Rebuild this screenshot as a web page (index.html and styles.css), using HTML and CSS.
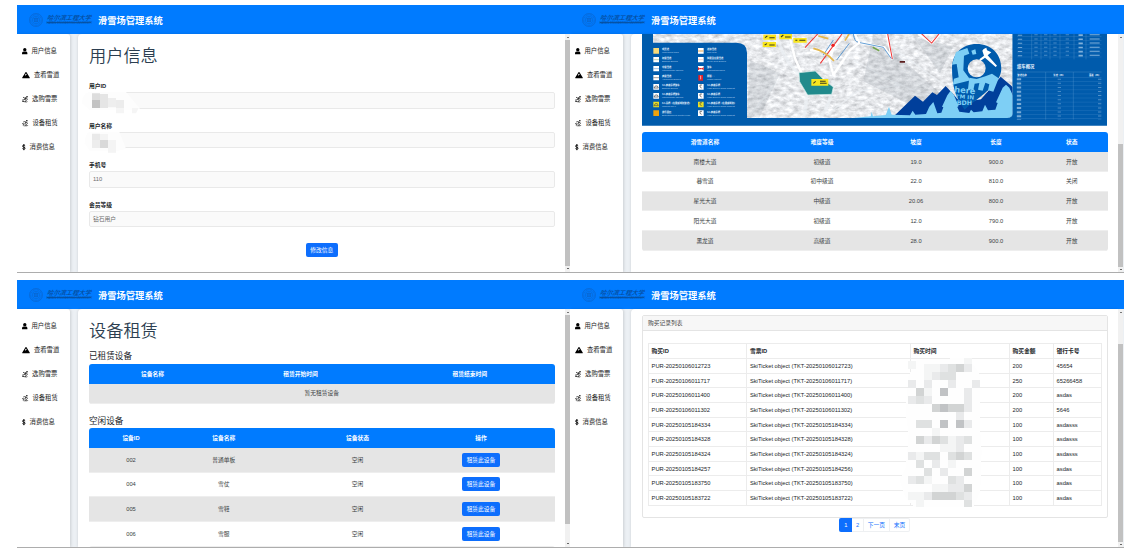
FILE: index.html
```html
<!DOCTYPE html>
<html>
<head>
<meta charset="utf-8">
<title>滑雪场管理系统</title>
<link rel="stylesheet" href="styles.css">
</head>
<body>
<svg class="defs" width="0" height="0">
  <symbol id="i-user" viewBox="0 0 14 16"><circle cx="7" cy="4.2" r="4.2"/><path d="M0 16v-3q0-4 4-4h6q4 0 4 4v3z"/></symbol>
  <symbol id="i-mount" viewBox="0 0 20 16"><path fill-rule="evenodd" d="M10 0q.8 0 1.300.8l8.300 13.400q.8 1.800-1.200 1.800H1.600Q-.4 16 .4 14.200L8.700.8Q9.200 0 10 0zM10 3.500L7.300 7.700l1.200 1.400 1.800-2h2z"/></symbol>
  <symbol id="i-ski" viewBox="0 0 16 16"><circle cx="13" cy="1.800" r="2"/><path fill="none" stroke="currentColor" stroke-width="2" d="M3 3l3 2 5-1-4 4 4 3-2 4M10 5l2 3h3M1 10l4 0 2-2M0 13l9 2.500q3 1 5-1"/></symbol>
  <symbol id="i-nordic" viewBox="0 0 16 16"><circle cx="12" cy="2" r="1.900"/><path fill="none" stroke="currentColor" stroke-width="1.700" d="M3 5l3-1 4 1-3 4 4 2-2 4M10 5l2 3h3M0 9l5 1-2 4M4 15h9l2-2"/></symbol>
  <symbol id="i-dollar" viewBox="0 0 9 16"><path fill="none" stroke="currentColor" stroke-width="2.200" d="M4.500 0v16M8 4.500Q7 3 4.500 3 1.200 3 1.200 5.400 1.200 7.400 4.500 8 8 8.600 8 10.800 8 13 4.500 13 2 13 1 11.300"/></symbol>
  <symbol id="i-seal" viewBox="0 0 28 28"><g fill="none" stroke="#0b62c4"><circle cx="14" cy="14" r="13" stroke-width="1.200"/><circle cx="14" cy="14" r="10.500" stroke-width="1.500" stroke-dasharray="1.500 1.300"/><circle cx="14" cy="14" r="7.500"/><path d="M9 11h10M9 14h10M10 17h8M14 8v11M11 10v8M17 10v8"/></g></symbol>
</svg>
<main class="board">

<section class="panel">
  <header class="top"><svg class="seal"><use href="#i-seal"/></svg><span class="school"><i>哈尔滨工程大学</i><small>HARBIN ENGINEERING UNIVERSITY</small></span><b>滑雪场管理系统</b></header>
  <div class="body">
    <nav class="side">
      <a><svg class="i-user"><use href="#i-user"/></svg>用户信息</a>
      <a><svg class="i-mount"><use href="#i-mount"/></svg>查看雪道</a>
      <a><svg class="i-ski"><use href="#i-ski"/></svg>选购雪票</a>
      <a><svg class="i-nordic"><use href="#i-nordic"/></svg>设备租赁</a>
      <a><svg class="i-dollar"><use href="#i-dollar"/></svg>消费信息</a>
    </nav>
    <div class="content">
      <h1>用户信息</h1>
      <div class="field"><label>用户ID</label><div class="input"></div>
        <svg class="mask" viewBox="0 0 174 66"><path fill="#fdfdfd" d="M22 0h110l42 50-24 5H24L0 34Q0 5 22 0z"/><path fill="#ddd" d="M30 4h24v20H30z"/><path fill="#c3c3c3" d="M30 24h24v24H30z"/><path fill="#e5e5e5" d="M54 6h24v18H54zM54 24h24v24H54z"/><path fill="#eee" d="M78 18h24v28H78z"/><path fill="#ececec" d="M102 24h24v24H102z"/><path fill="#f5f5f5" d="M102 48h24v16H102zM150 48h20l-8 16h-12z"/></svg></div>
      <div class="field"><label>用户名称</label><div class="input"></div>
        <svg class="mask" viewBox="0 0 174 66"><path fill="#fdfdfd" d="M22 0h90l20 50-28 8H24L8 34Q10 5 22 0z"/><path fill="#e9e9e9" d="M30 5h24v19H30z"/><path fill="#ededed" d="M30 24h24v24H30z"/><path fill="#d9d9d9" d="M54 24h24v24H54z"/><path fill="#f4f4f4" d="M54 6h24v18H54zM78 24h24v38H78z"/></svg></div>
      <div class="field"><label>手机号</label><div class="input">110</div></div>
      <div class="field"><label>会员等级</label><div class="input">钻石用户</div></div>
      <button class="btn edit">修改信息</button>
    </div>
    <div class="scroll s1"><i></i></div>
  </div>
</section>

<section class="panel">
  <header class="top"><svg class="seal"><use href="#i-seal"/></svg><span class="school"><i>哈尔滨工程大学</i><small>HARBIN ENGINEERING UNIVERSITY</small></span><b>滑雪场管理系统</b></header>
  <div class="body">
    <nav class="side">
      <a><svg class="i-user"><use href="#i-user"/></svg>用户信息</a>
      <a><svg class="i-mount"><use href="#i-mount"/></svg>查看雪道</a>
      <a><svg class="i-ski"><use href="#i-ski"/></svg>选购雪票</a>
      <a><svg class="i-nordic"><use href="#i-nordic"/></svg>设备租赁</a>
      <a><svg class="i-dollar"><use href="#i-dollar"/></svg>消费信息</a>
    </nav>
    <div class="content flush">
      <svg class="map" viewBox="1926 102 1395 275" preserveAspectRatio="none">
        <defs>
          <filter id="snow" x="0" y="0" width="100%" height="100%"><feTurbulence type="fractalNoise" baseFrequency=".05 .09" numOctaves="4" seed="8"/><feColorMatrix values=".75 0 0 0 .42  .75 0 0 0 .435  .75 0 0 0 .46  0 0 0 0 1"/></filter>
          <pattern id="rows" width="264" height="12.300" patternUnits="userSpaceOnUse" x="3051" y="0"><path d="M0 12h254" stroke="#5b9ad2" stroke-width="1"/></pattern>
          <clipPath id="land"><path d="M1959 102H3038v238q0 14-18 14H2241V158q0-30-32-30H1959z"/></clipPath>
        </defs>
        <path fill="#005bac" d="M1926 102h1395v275H1926z"/>
        <g clip-path="url(#land)">
          <path fill="#cfd3d8" filter="url(#snow)" d="M1959 102h1079v252H1959z"/>
          <g fill="none" stroke="#edf1f5" opacity=".7"><path stroke-width="10" d="M2330 105q15 65 60 110t20 139M2500 240q-5 70-40 114"/><path stroke-width="4" d="M2560 180l110 60 160 70M2250 345l90-110M2660 130l180 130M2480 345l90-70 130-20"/></g>
          <path fill="#8f969e" opacity=".22" d="M2620 102l260 230-70 22-220-110zM2250 180l90 40-60 130h-40zM2740 110l120 30-40 80z"/>
          <g fill="none" stroke="#fff" stroke-width="7"><path d="M2370 115l15 60 20 45M2500 225l-12-45 18-50M2500 225l50-75 28-22 75 14 24 35M2578 128l-14-26M2660 102l17 75M2755 102l40 26 26-26M2430 150l60 5 40-45"/></g>
          <path fill="#218a8c" stroke="#d6ece9" stroke-width="2" d="M2397 218l49-5 29 30 25 18-5 22-72 2-24-40z"/>
          <path fill="none" stroke="#e33" stroke-width="3" d="M2415 143l38-41M2461 190l65-88M2663 102l14 75M2765 102l30 27 22-27"/>
          <circle cx="2499" cy="136" r="5" fill="#e22"/>
          <path fill="none" stroke="#438acb" stroke-width="2.500" d="M2510 180l38-50M2580 128l70 14 24 34M2560 102q4 25 14 24M2470 165l30-45"/>
          <path fill="none" stroke="#e4b74d" stroke-width="5" d="M2440 145q35 8 62 38M2535 122l12-20M2455 108l30 8"/>
          <path fill="none" stroke="#73a34d" stroke-width="5" d="M2618 142l20 10"/>
          <g fill="#f8e51d"><path d="M2290 104h38v15h-38zM2288 126h40v15h-40zM2338 102h38v16h-38zM2380 114h40v14h-40zM2434 237h51v20h-51z"/></g>
          <g fill="none" stroke="#393b24" stroke-width="3"><path d="M2295 113l7-5M2308 113h16M2294 135l7-4M2308 135h16M2343 111l7-6M2355 111h17M2386 121h6M2398 121h18M2440 250l7-6M2460 244h17M2460 250h20"/></g>
          <path fill="#5b1d1d" d="M2699 183h16v5h-16z"/>
          <path fill="#003f9b" d="M2680 350l65-63 24 18 28-28 14 8 26-27 46 50 60-10 59-68 42 36v93z"/>
          <path fill="#005bac" fill-rule="evenodd" d="M2930 132c44 0 74 30 74 73 0 48-58 78-110 124-26-34-38-66-38-124 0-43 30-73 74-73zM2930 178a26 26 0 100 54 26 26 0 000-54z"/>
          <g fill="#7ecff5"><path d="M2868 156l34-12 6 17-16 6-2 44 22 30-54 13 4-18 14-4-6-40-14 2zM2914 152l12-4 3 14-11 2z"/><path d="M2908 233l22 4 26-8 20-8 20 14-16 40-16-4 4-18-12-5-8 24-14-3 4-20-14 2-4 20-16-4z"/></g>
          <g class="pin"><text x="2862" y="277" transform="rotate(5 2862 277)" font-size="25">here</text><text x="2867" y="295" font-size="17" transform="rotate(4 2867 295)">I'M IN</text><text x="2870" y="315" font-size="19">BDH</text></g>
          <path fill="#fff" d="M2951 147l8-4 2 8 13 6-11 9 28 31-4 4-32-28-14 10-3-5 14-11-5-15z"/>
          <path fill="#7ecff5" d="M2560 354l52-5 3-14 4 14 38-4 10-25 8 24 55 2 8-14 8 12 32-2 10-22 12-14 12 34 12-2 6-16-4-2 16-34 10-14 10 14 14 32-4 3 6 14 30 4 5-10 8 8 26-3 8-20 9 17 22-2 7-20-5-2 20-44 10-9 10 9 20 44-5 2 12 20v36z"/>
        </g>
        <g>
          <g fill="#fff"><path fill="#f6d978" d="M1960 144h17v17h-17z"/><path d="M1960 171h17v16h-17zM1960 198h17v16h-17zM1960 225h17v16h-17zM1960 252h17v17h-17zM1960 279h17v17h-17z"/><path fill="#e9df26" d="M1960 305h17v17h-17zM2094 305h17v17h-17z"/><path fill="#f0a30b" d="M1960 331h17v17h-17z"/><path d="M2094 144h17v17h-17zM2094 171h17v16h-17zM2094 198h17v16h-17zM2094 252h17v17h-17zM2094 279h17v17h-17zM2094 331h17v17h-17z"/></g>
          <path fill="#e02028" d="M2094 201l7 5-7 5zM2111 201l-7 5 7 5zM2100 204h5v4h-5zM2095 225h14v17h-14z"/>
          <g fill="none" stroke="#444" stroke-width="2"><path d="M1962 264l4-6h6l3 6zM1962 291l4-6h6l3 6zM1962 317l4-6h6l3 6zM2106 255h-6v6l5 3M2106 282h-6v6l5 3M2106 308h-6v6l5 3M2106 334h-6v6l5 3"/></g>
          <path fill="none" stroke="#9dbb8f" stroke-width="2" d="M1960 179h17"/><path stroke="#6aa0d8" stroke-width="2" d="M1960 206h17"/><path stroke="#666" stroke-width="2" d="M1960 233h17"/><path stroke="#e8b9b0" stroke-width="2" d="M2094 179h17"/><path stroke="#e9a34d" stroke-width="3" d="M2094 153h17"/><path stroke="#fff" stroke-width="2" d="M2102 227v11"/>
          <g class="zh"><text x="1986" y="151">观景道</text><text x="1986" y="178">初级雪道</text><text x="1986" y="205">中级雪道</text><text x="1986" y="232">高级雪道</text><text x="1986" y="259">4人高速吊椅缆车</text><text x="1986" y="286">4人高速吊椅缆车</text><text x="1986" y="312">6人吊椅（在建或规划缆道）</text><text x="1986" y="339">游乐园区</text><text x="2121" y="151">连接雪道</text><text x="2121" y="178">拟建及在建雪道</text><text x="2121" y="205">缆车</text><text x="2121" y="232">魔毯 ○</text><text x="2121" y="259">4人高速吊椅</text><text x="2121" y="286">4人高速吊椅</text><text x="2121" y="312">4人高速吊椅（在建或规划）</text><text x="2121" y="339">4人高速吊椅</text></g>
          <g class="en"><text x="1986" y="160">Wild snow trails</text><text x="1986" y="187">Easiest Slopes</text><text x="1986" y="214">Intermediate Slopes</text><text x="1986" y="241">Advanced Slopes</text><text x="1986" y="268">Easiest Slopes</text><text x="1986" y="295">Intermediate Slopes</text><text x="1986" y="321">Chairlift No.6</text><text x="1986" y="348">Entertainment Center Park</text><text x="2121" y="160">Link Trail</text><text x="2121" y="187">To be built Slopes</text><text x="2121" y="214">Chairlift/Gondola</text><text x="2121" y="241">Magic Carpet</text><text x="2121" y="268">High Speed Quad Chairlift</text><text x="2121" y="295">High Speed Quad Chairlift</text><text x="2121" y="321">High Speed Quad Chairlift</text><text x="2121" y="348">High Speed Quad Chairlift</text></g>
        </g>
        <path fill="url(#rows)" d="M3051 102h254v76h-254zM3051 230h254v129h-254z"/>
        <path fill="none" stroke="#5b9ad2" d="M3095 102v76M3123 102v76M3150 102v76M3180 102v76M3222 102v76M3258 102v76M3051 216h254M3137 216v143M3220 216v143"/>
        <g fill="none" stroke="#a0c5e6"><path stroke-dasharray="3 9.300" stroke-width="13" opacity=".7" d="M3060 104v74"/><path stroke-dasharray="5 7.300" stroke-width="13" opacity=".8" d="M3242 103v74"/><path stroke-dasharray="3 9.300" stroke-width="30" opacity=".8" d="M3284 103v74"/><path stroke-dasharray="3 9.300" stroke-width="10" opacity=".45" d="M3108 103v74M3137 103v74M3165 103v74M3202 103v74M3178 236v124"/><path stroke-dasharray="6 6.300" stroke-width="13" opacity=".75" d="M3057 235v124"/><path stroke-dasharray="3 9.300" stroke-width="10" opacity=".5" d="M3299 236v124"/></g>
        <g class="zh"><text class="cap" x="3051" y="205">缆车概况</text><text x="3052" y="227">缆道名称</text><text x="3160" y="227">长度（m）</text><text x="3267" y="227">落差（m）</text></g>
      </svg>
      <table class="grid runs">
        <colgroup><col class="w126"><col class="w108"><col class="w80"><col class="w80"><col></colgroup>
        <tr><th>滑雪道名称</th><th>难度等级</th><th>坡度</th><th>长度</th><th>状态</th></tr>
        <tr><td>南楼大道</td><td>初级道</td><td>19.0</td><td>900.0</td><td>开放</td></tr>
        <tr><td>暮雪道</td><td>初中级道</td><td>22.0</td><td>810.0</td><td>关闭</td></tr>
        <tr><td>星光大道</td><td>中级道</td><td>20.06</td><td>800.0</td><td>开放</td></tr>
        <tr><td>阳光大道</td><td>初级道</td><td>12.0</td><td>790.0</td><td>开放</td></tr>
        <tr><td>黑龙道</td><td>高级道</td><td>28.0</td><td>900.0</td><td>开放</td></tr>
      </table>
    </div>
    <div class="scroll s2"><i></i></div>
  </div>
</section>

<section class="panel">
  <header class="top"><svg class="seal"><use href="#i-seal"/></svg><span class="school"><i>哈尔滨工程大学</i><small>HARBIN ENGINEERING UNIVERSITY</small></span><b>滑雪场管理系统</b></header>
  <div class="body">
    <nav class="side">
      <a><svg class="i-user"><use href="#i-user"/></svg>用户信息</a>
      <a><svg class="i-mount"><use href="#i-mount"/></svg>查看雪道</a>
      <a><svg class="i-ski"><use href="#i-ski"/></svg>选购雪票</a>
      <a><svg class="i-nordic"><use href="#i-nordic"/></svg>设备租赁</a>
      <a><svg class="i-dollar"><use href="#i-dollar"/></svg>消费信息</a>
    </nav>
    <div class="content">
      <h1>设备租赁</h1>
      <h2 class="rented">已租赁设备</h2>
      <table class="grid">
        <colgroup><col class="w127"><col class="w169"><col></colgroup>
        <tr><th>设备名称</th><th>租赁开始时间</th><th>租赁结束时间</th></tr>
        <tr><td colspan="3">暂无租赁设备</td></tr>
      </table>
      <h2 class="idle">空闲设备</h2>
      <table class="grid tall">
        <colgroup><col class="w84"><col class="w101"><col class="w166"><col></colgroup>
        <tr><th>设备ID</th><th>设备名称</th><th>设备状态</th><th>操作</th></tr>
        <tr><td>002</td><td>普通单板</td><td>空闲</td><td><button class="btn">租赁此设备</button></td></tr>
        <tr><td>004</td><td>雪仗</td><td>空闲</td><td><button class="btn">租赁此设备</button></td></tr>
        <tr><td>005</td><td>雪鞋</td><td>空闲</td><td><button class="btn">租赁此设备</button></td></tr>
        <tr><td>006</td><td>雪服</td><td>空闲</td><td><button class="btn">租赁此设备</button></td></tr>
      </table>
    </div>
    <div class="scroll s3"><i></i></div>
  </div>
</section>

<section class="panel">
  <header class="top"><svg class="seal"><use href="#i-seal"/></svg><span class="school"><i>哈尔滨工程大学</i><small>HARBIN ENGINEERING UNIVERSITY</small></span><b>滑雪场管理系统</b></header>
  <div class="body">
    <nav class="side">
      <a><svg class="i-user"><use href="#i-user"/></svg>用户信息</a>
      <a><svg class="i-mount"><use href="#i-mount"/></svg>查看雪道</a>
      <a><svg class="i-ski"><use href="#i-ski"/></svg>选购雪票</a>
      <a><svg class="i-nordic"><use href="#i-nordic"/></svg>设备租赁</a>
      <a><svg class="i-dollar"><use href="#i-dollar"/></svg>消费信息</a>
    </nav>
    <div class="content flush">
      <div class="card">
        <div class="card-head">购买记录列表</div>
        <div class="records">
          <div class="rec head"><span>购买ID</span><span>雪票ID</span><span>购买时间</span><span>购买金额</span><span>银行卡号</span></div>
          <div class="rec"><span>PUR-20250106012723</span><span>SkiTicket object (TKT-20250106012723)</span><span></span><span>200</span><span>45654</span></div>
          <div class="rec"><span>PUR-20250106011717</span><span>SkiTicket object (TKT-20250106011717)</span><span></span><span>250</span><span>65266458</span></div>
          <div class="rec"><span>PUR-20250106011400</span><span>SkiTicket object (TKT-20250106011400)</span><span></span><span>200</span><span>asdas</span></div>
          <div class="rec"><span>PUR-20250106011302</span><span>SkiTicket object (TKT-20250106011302)</span><span></span><span>200</span><span>5646</span></div>
          <div class="rec"><span>PUR-20250105184334</span><span>SkiTicket object (TKT-20250105184334)</span><span></span><span>100</span><span>asdasss</span></div>
          <div class="rec"><span>PUR-20250105184328</span><span>SkiTicket object (TKT-20250105184328)</span><span></span><span>100</span><span>asdasss</span></div>
          <div class="rec"><span>PUR-20250105184324</span><span>SkiTicket object (TKT-20250105184324)</span><span></span><span>100</span><span>asdasss</span></div>
          <div class="rec"><span>PUR-20250105184257</span><span>SkiTicket object (TKT-20250105184256)</span><span></span><span>100</span><span>asdas</span></div>
          <div class="rec"><span>PUR-20250105183750</span><span>SkiTicket object (TKT-20250105183750)</span><span></span><span>100</span><span>asdas</span></div>
          <div class="rec"><span>PUR-20250105183722</span><span>SkiTicket object (TKT-20250105183722)</span><span></span><span>100</span><span>asdas</span></div>
          <svg class="mosaic" viewBox="176 250 250 450" shape-rendering="crispEdges">
            <path fill="#fefefe" d="M230 255l140-5 30 20 20 30v170l4 60-4 120-20 46H220l-26-30-17-50 20-40 8-100-9-60 8-110z"/>
            <path fill="#f4f5f5" d="M204 260h24v24h-24zM252 267h24v48h-24zM276 267h24v24h-24zM372 250h24v42h-24zM252 339h24v24h-24zM276 460h24v24h-24zM324 484h24v24h-24zM300 508h48v24h-48zM228 532h24v24h-24zM324 556h24v24h-24zM252 604h24v24h-24zM276 628h48v24h-48zM204 652h48v24h-48zM228 676h24v22h-24z"/>
            <path fill="#e9eaeb" d="M300 267h24v24h-24zM372 267h24v24h-24zM276 291h24v24h-24zM204 315h24v24h-24zM252 315h24v24h-24zM324 315h24v24h-24zM396 315h24v24h-24zM372 339h24v24h-24zM204 363h24v24h-24zM252 363h24v24h-24zM372 363h24v48h-24zM348 411h24v24h-24zM372 435h24v24h-24zM252 484h24v24h-24zM348 484h24v48h-24zM204 532h24v24h-24zM276 556h24v24h-24zM300 580h24v24h-24zM204 604h24v24h-24zM348 604h24v24h-24zM324 628h48v24h-48zM372 652h24v24h-24zM252 652h24v24h-24z"/>
            <path fill="#dfe1e1" d="M324 267h24v24h-24zM300 291h24v24h-24zM324 291h24v24h-24zM228 363h24v24h-24zM228 435h48v24h-48zM300 484h24v24h-24zM372 484h24v24h-24zM252 532h48v24h-48zM324 532h24v24h-24zM372 532h24v24h-24zM228 556h24v24h-24zM252 580h24v24h-24zM228 604h24v24h-24zM324 604h24v24h-24zM348 652h24v24h-24zM372 676h24v22h-24z"/>
            <path fill="#d2d4d4" d="M348 267h24v24h-24zM228 339h24v24h-24zM276 387h96v24h-96zM228 484h24v24h-24zM276 484h24v24h-24zM348 532h24v24h-24zM372 580h24v24h-24zM372 628h24v24h-24zM276 652h72v24h-72z"/>
            <path fill="#c1c3c5" d="M300 339h24v24h-24zM300 387h24v24h-24zM300 435h24v24h-24zM348 435h24v24h-24z"/>
          </svg>
        </div>
      </div>
      <div class="pager"><a class="on">1</a><a>2</a><a>下一页</a><a>末页</a></div>
    </div>
    <div class="scroll s4"><i></i></div>
  </div>
</section>
</main>
</body>
</html>
```
FILE: styles.css
```css
* { box-sizing: border-box; }
body { margin: 0; background: #fff; overflow: hidden; color: #212529; font: 5.75px/8.6px "Liberation Sans", "Noto Sans CJK SC", sans-serif; }
.defs { position: absolute; }
.board { display: grid; grid-template-columns: 553px 554px; grid-auto-rows: 268px; row-gap: 7px; padding: 5px 0 0 17px; }
.panel { overflow: hidden; border-bottom: 1px solid #adadad; display: flex; flex-direction: column; }
.top { flex: none; height: 29px; background: #007bff; display: flex; align-items: center; color: #fff; padding-left: 12px; }
.seal { width: 14px; height: 14px; }
.school { width: 44px; margin-left: 3.500px; color: #064a98; font: 6.300px/8px "Noto Sans CJK SC", sans-serif; white-space: nowrap; }
.school i { display: block; font-weight: 500; transform: skewX(-8deg); }
.school small { display: block; font: 2.650px/2px "Liberation Sans", sans-serif; border-top: .5px solid #0758ae; }
.top b { margin-left: 7.500px; font: bold 9.240px/14px "Noto Sans CJK SC", sans-serif; }
.body { flex: 1; min-height: 0; display: flex; background: #ecf0f4; }
.side { width: 53px; flex: none; background: #fff; padding: 5.400px 0 0 5.300px; border-top-right-radius: 3px; box-shadow: 1px 0 3px #0002; }
.side a { display: flex; align-items: center; height: 24px; gap: 3.600px; font-size: 6.350px; color: #222; }
.side svg { height: 6.400px; color: #000; overflow: visible; }
.i-user { width: 5.600px; }
.i-mount { width: 8px; }
.i-ski { width: 6.200px; }
.i-nordic { width: 6.500px; }
.i-dollar { width: 3.700px; }
.content { width: 487px; flex: none; margin-left: 8px; padding: 9px 10.500px 0 11px; background: #fff; border-top-left-radius: 4px; box-shadow: 0 0 3px #0002; overflow: hidden; }
.content.flush { padding-top: 0; }
.scroll { width: 5px; flex: none; background: #f1f1f1; border-top: 3px solid #f1f1f1; }
.scroll i { display: block; background: #c1c1c1; }
.scroll::before { content: ""; display: block; width: 2px; height: 1px; margin: 0 auto; background: #777; }
.s1 i { margin-top: 2px; height: 226px; }
.s2 i { margin-top: 106px; height: 123px; }
.s3 i { margin-top: 2px; height: 209px; }
.s4 i { margin-top: 31px; height: 198px; }
.scroll::after { content: ""; display: block; width: 2px; height: 1px; margin: 2px auto 0; background: #666; }
.s3::after { margin-top: 19px; }

h1 { margin: 0; font: 350 17.200px/24px "Noto Sans CJK SC", sans-serif; color: #2c3e50; }
.field { position: relative; height: 39.500px; padding-top: 15px; }
.field label { display: block; height: 10.300px; font-weight: bold; }
.input { height: 16.500px; border: 1px solid #e9e9e9; border-radius: 2px; background: #fafafa; padding: 3px; color: #6c6c6c; }
.mask { position: absolute; left: -7px; top: 25px; width: 58px; height: 22px; }
.btn { display: block; height: 14px; border: 0; border-radius: 2px; padding: 0 4.600px; background: #0d6efd; color: #fff; font: 5.750px/14px "Noto Sans CJK SC", sans-serif; margin: 0 auto; }
.edit { margin-top: 17.500px; }

h2 { margin: 0; font: 400 8.600px/12px "Noto Sans CJK SC", sans-serif; }
.rented { margin-top: 7px; height: 15px; }
.idle { margin-top: 10px; height: 14.500px; }
.grid { width: 465.500px; table-layout: fixed; border-spacing: 0; border-radius: 3px; overflow: hidden; text-align: center; }
.grid td, .grid th { height: 19.750px; padding: 0; font-size: 5.750px; line-height: 8px; }
.grid th { background: #007bff; color: #fff; }
.grid tr:nth-child(even) td { background: #e5e5e5; }
.grid td { color: #3b3f43; border-bottom: .5px solid #eee; }
.tall td { height: 24.800px; }
.tall th:last-child, .tall td:last-child { padding-right: 33px; }
.runs { margin-top: 6.800px; }
.w126 { width: 126px; } .w108 { width: 108px; } .w80 { width: 80px; }
.w127 { width: 127px; } .w169 { width: 169px; }
.w84 { width: 84px; } .w101 { width: 101.500px; } .w166 { width: 166px; }

.map { display: block; width: 465px; height: 91.700px; }
.zh { fill: #eaf4ff; font: bold 7px "Noto Sans CJK SC", sans-serif; }
.zh .cap { font-size: 13px; }
.en { fill: #b3d2ee; font: 7.200px "Liberation Sans", sans-serif; }
.pin { fill: #7ecff5; font-family: "DejaVu Sans", sans-serif; font-weight: bold; }

.card { margin-top: 6.200px; height: 202.500px; border: 1px solid #e4e4e4; border-radius: 2px; }
.card-head { height: 14.500px; padding: 3px 5px; background: #f7f7f7; border-bottom: 1px solid #e4e4e4; color: #444; }
.records { position: relative; margin: 12.600px 5px 0; border: solid #ececec; border-width: 1px 0 0 1px; }
.rec { display: grid; grid-template-columns: 98.300px 163.700px 99px 44px 1fr; height: 14.700px; white-space: nowrap; }
.rec span { border: solid #ececec; border-width: 0 1px 1px 0; padding: 3px 2.600px 0; }
.head { font-weight: bold; }
.mosaic { position: absolute; left: 249.700px; top: 14px; width: 83.300px; height: 150px; }
.pager { display: flex; width: 71px; margin: 0 auto; height: 14px; border: 1px solid #eef0f2; border-left: 0; border-radius: 2px; color: #0d6efd; line-height: 12px; }
.pager a { padding: 0 3.800px; border-right: 1px solid #eef0f2; white-space: nowrap; }
.pager a:last-child { border: 0; }
.pager .on { background: #0d6efd; color: #fff; margin: -1px 0; padding: 1px 4.900px 0; border-radius: 2px 0 0 2px; border: 0; }
```
